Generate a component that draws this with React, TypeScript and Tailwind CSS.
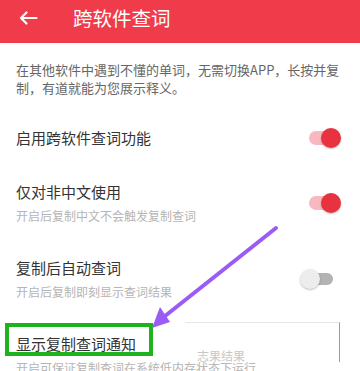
import React from "react";

const FONT = { fontFamily: '"Noto Sans CJK SC", "Noto Sans", sans-serif' };

function Toggle({ on }: { on: boolean }) {
  return (
    <div className="relative w-[41px] h-5 mr-[19px] shrink-0">
      {on ? (
        <>
          <div className="absolute left-[9px] top-[3px] w-[26px] h-[14px] rounded-full bg-[#f7b9bf]" />
          <div className="absolute right-0 top-0 w-5 h-5 rounded-full bg-[#e8323f] shadow-[0_1px_2px_rgba(0,0,0,0.25)]" />
        </>
      ) : (
        <>
          <div className="absolute left-[7px] top-[4px] w-[26px] h-3 rounded-full bg-[#b3b3b3]" />
          <div className="absolute left-0 top-0 w-5 h-5 rounded-full bg-[#ededed] shadow-[0_1px_2px_rgba(0,0,0,0.25)]" />
        </>
      )}
    </div>
  );
}

function Row({
  title,
  sub,
  on,
  highlight,
}: {
  title: string;
  sub?: string;
  on?: boolean;
  highlight?: boolean;
}) {
  return (
    <div className="flex items-center justify-between pl-4 py-4">
      <div className="flex flex-col gap-1">
        <span className="text-[15px] leading-[22px] text-[#333]">{title}</span>
        {sub && (
          <span className="text-[12px] leading-[18px] text-[#b5b5b5]">{sub}</span>
        )}
      </div>
      {on !== undefined && <Toggle on={on} />}
    </div>
  );
}

export default function App() {
  return (
    <div className="relative w-[360px] h-[371px] overflow-hidden bg-white" style={FONT}>
      {/* Header */}
      <div className="h-[43px] pb-2 flex items-center bg-[#ef3b4a]">
        <svg width="19" height="14" viewBox="0 0 19 14" className="ml-[19px]" fill="none" stroke="white" strokeWidth="2.2" strokeLinecap="round" strokeLinejoin="round">
          <path d="M17.5 7H2M7.5 1.5L2 7l5.5 5.5" />
        </svg>
        <span className="ml-[35px] text-[19.5px] leading-[26px] text-white">跨软件查词</span>
      </div>

      {/* Description */}
      <p className="px-4 pt-[18px] text-[13px] leading-[18px] text-[#666]">
        在其他软件中遇到不懂的单词，无需切换APP，长按并复制，有道就能为您展示释义。
      </p>

      <div className="mt-[14px]">
        <Row title="启用跨软件查词功能" on />
        <Row title="仅对非中文使用" sub="开启后复制中文不会触发复制查词" on />
        <Row title="复制后自动查词" sub="开启后复制即刻显示查词结果" on={false} />
        <Row title="显示复制查词通知" sub="开启可保证复制查词在系统低内存状态下运行" />
      </div>

      {/* faint leftover popup */}
      <div className="absolute left-[185px] top-[322px] w-[155px] h-[40px] border-t border-r border-[#e6e6e6] border-r-[#9a9a9a] pointer-events-none">
        <span className="absolute left-[12px] top-[26px] text-[12px] leading-[14px] text-[#c8c8c8]">志果结果</span>
      </div>

      {/* Green highlight box */}
      <div className="absolute left-[5px] top-[323px] w-[148px] h-[33px] border-4 border-[#1eb21e]" />

      {/* Purple arrow */}
      <svg className="absolute left-0 top-0 pointer-events-none" width="360" height="371" viewBox="0 0 360 371">
        <line x1="276" y1="228" x2="160" y2="320" stroke="#9b5cf6" strokeWidth="4" strokeLinecap="round" />
        <polygon points="152,328 160,307 170,322" fill="#9b5cf6" />
      </svg>
    </div>
  );
}
